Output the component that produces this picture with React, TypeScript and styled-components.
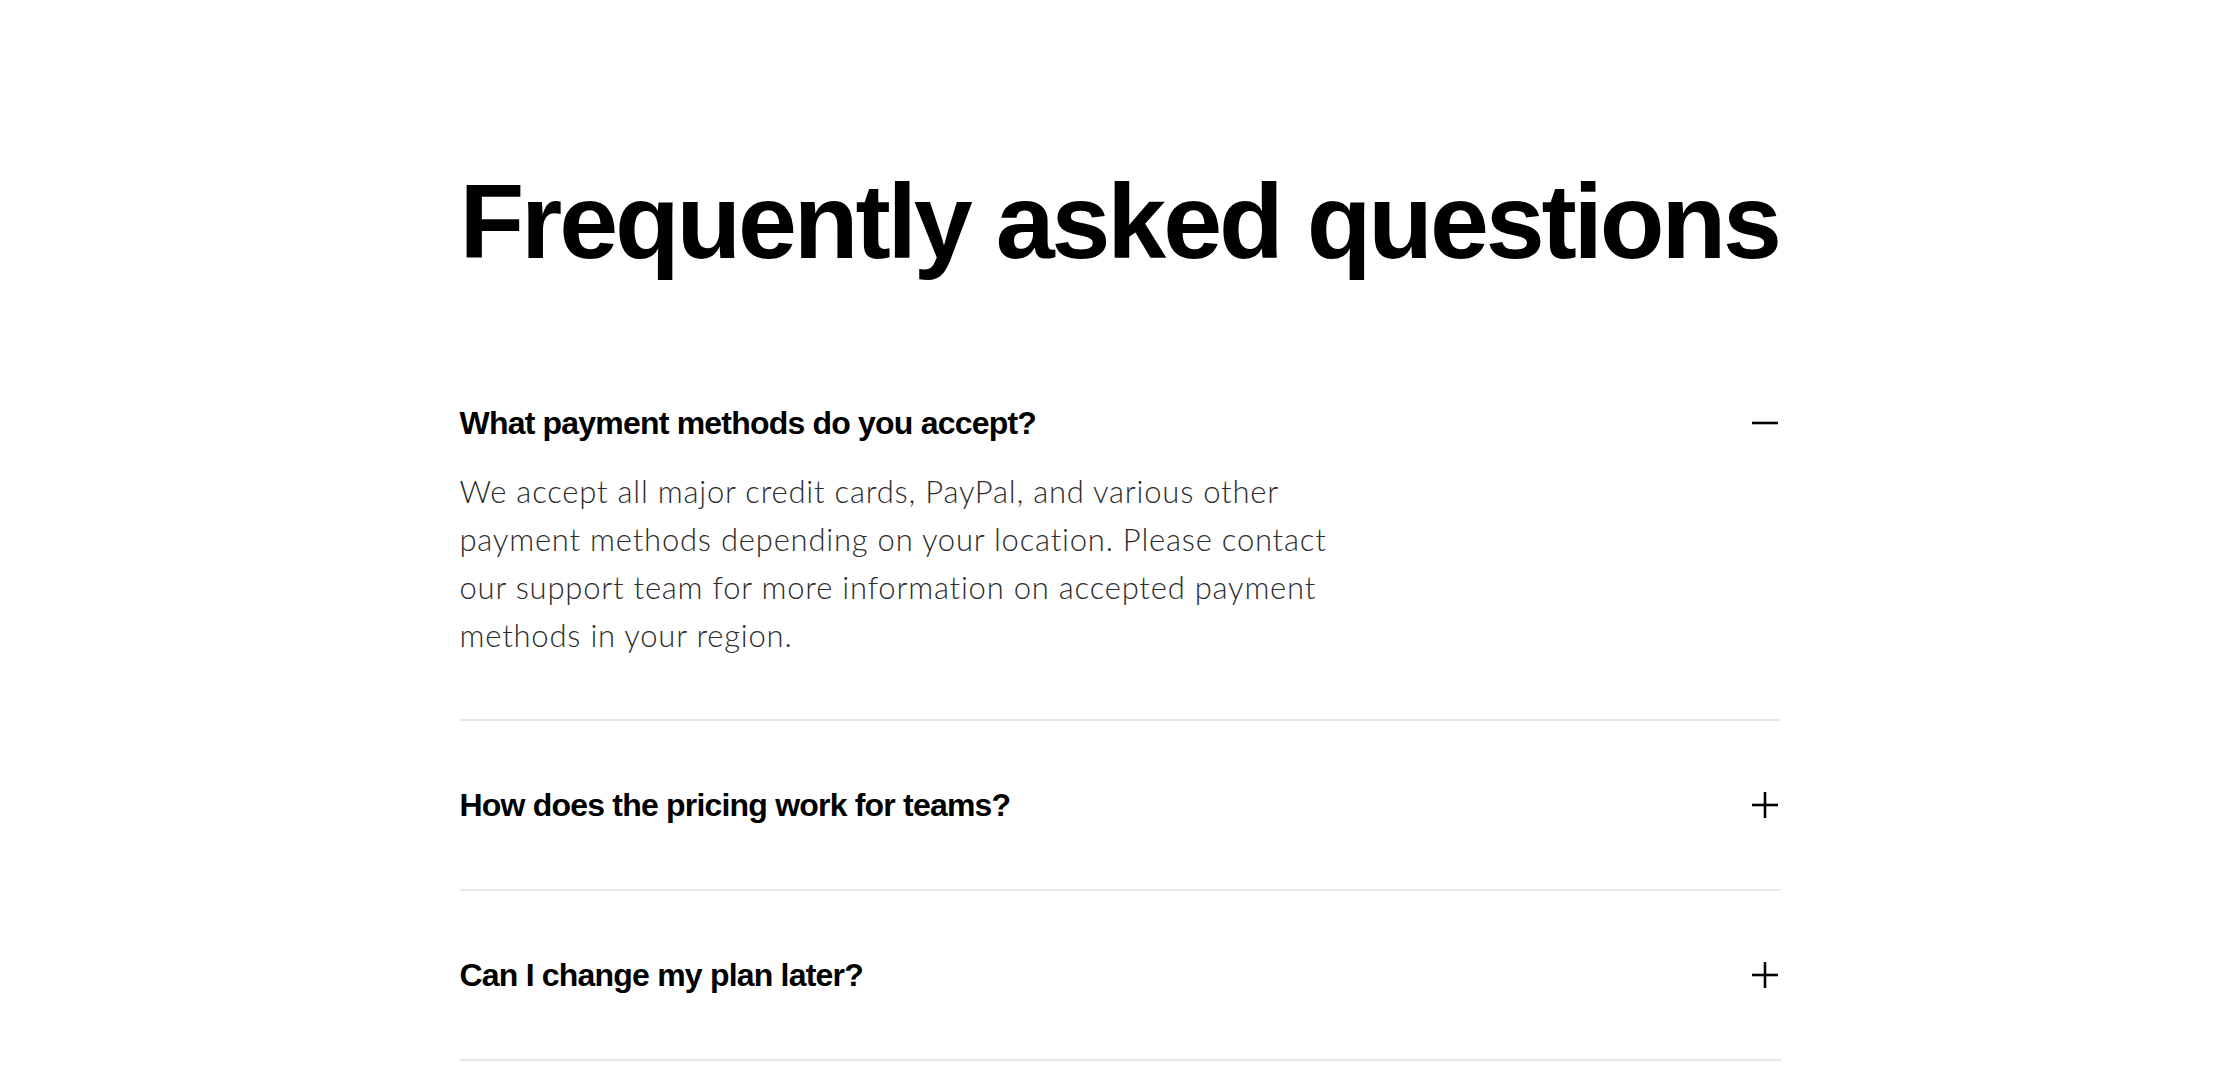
import React, { useState } from "react";
import styled, { createGlobalStyle } from "styled-components";

const Global = createGlobalStyle`
  html, body { margin: 0; padding: 0; background: #ffffff; }
  body { font-family: "Liberation Sans", Arial, sans-serif; color: #000; }
`;

const Section = styled.section`
  display: flex;
  justify-content: center;
  padding: 168px 0 0;
`;

const Inner = styled.div`
  width: 1321px;
  display: flex;
  flex-direction: column;
`;

const Title = styled.h1`
  margin: 0 0 130px;
  font-family: "Liberation Sans", Arial, sans-serif;
  font-weight: 700;
  font-size: 106px;
  line-height: 1;
  letter-spacing: -0.03em;
  white-space: nowrap;
  color: #000;
`;

const List = styled.div`
  display: flex;
  flex-direction: column;
`;

const Item = styled.div<{ $first?: boolean }>`
  border-bottom: 2px solid #e8e8e8;
  padding: ${(p) => (p.$first ? "0" : "65px")} 0 ${(p) => (p.$first ? "60px" : "65px")};
`;

const QuestionRow = styled.button`
  all: unset;
  box-sizing: border-box;
  width: 100%;
  display: flex;
  align-items: center;
  justify-content: space-between;
  cursor: pointer;
`;

const QuestionText = styled.span`
  font-family: "Liberation Sans", Arial, sans-serif;
  font-weight: 700;
  font-size: 32px;
  line-height: 38px;
  letter-spacing: -0.025em;
  color: #000;
`;

const Answer = styled.p`
  margin: 25px 0 0;
  max-width: 880px;
  font-family: Lato, "Open Sans", sans-serif;
  font-weight: 300;
  font-size: 31px;
  line-height: 48px;
  letter-spacing: 0.025em;
  color: #2c2c2c;
`;

const IconBox = styled.span`
  display: flex;
  width: 32px;
  height: 32px;
`;

const ToggleIcon = ({ open }: { open: boolean }) => (
  <IconBox>
    <svg width="32" height="32" viewBox="0 0 32 32" fill="none">
      <line x1="3" y1="16" x2="29" y2="16" stroke="#000" strokeWidth="2.6" />
      {!open && <line x1="16" y1="3" x2="16" y2="29" stroke="#000" strokeWidth="2.6" />}
    </svg>
  </IconBox>
);

const faqs = [
  {
    q: "What payment methods do you accept?",
    a: "We accept all major credit cards, PayPal, and various other payment methods depending on your location. Please contact our support team for more information on accepted payment methods in your region.",
  },
  { q: "How does the pricing work for teams?", a: "" },
  { q: "Can I change my plan later?", a: "" },
];

export default function App() {
  const [open, setOpen] = useState(0);
  return (
    <>
      <Global />
      <Section>
        <Inner>
          <Title>Frequently asked questions</Title>
          <List>
            {faqs.map((f, i) => (
              <Item key={f.q} $first={i === 0}>
                <QuestionRow onClick={() => setOpen(open === i ? -1 : i)}>
                  <QuestionText>{f.q}</QuestionText>
                  <ToggleIcon open={open === i} />
                </QuestionRow>
                {open === i && f.a && <Answer>{f.a}</Answer>}
              </Item>
            ))}
          </List>
        </Inner>
      </Section>
    </>
  );
}
